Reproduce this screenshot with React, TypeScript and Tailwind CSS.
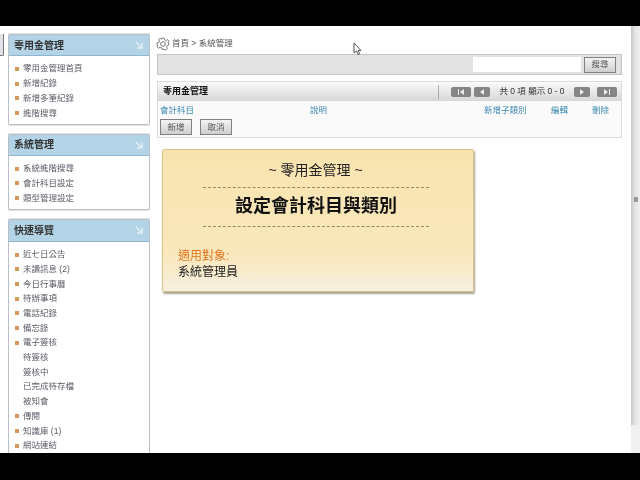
import React from 'react';

const cjk = "font-['Liberation_Sans','Noto_Sans_CJK_TC',sans-serif]";

function Panel({ title, items, tall }: { title: string; items: { label: string; plain?: boolean }[]; tall?: boolean }) {
  return (
    <div className={`shrink-0 rounded-[2px] border border-[#b9bfc6] bg-white shadow-[0_0_0_1px_#e3e3e3] ${tall ? 'h-[250px]' : ''}`}>
      <div className={`flex items-center justify-between border-b border-[#8fb6cc] bg-[#b3d4e6] pr-[6px] pl-[5px] ${tall ? 'h-[22px]' : 'h-[21px]'}`}>
        <span className="text-[10px] font-bold text-[#333]">{title}</span>
        <svg width="8" height="8" viewBox="0 0 8 8" className="opacity-90">
          <path d="M1 1 L6.5 6.5 M7 2 V7 H2" fill="none" stroke="#e8f2f8" strokeWidth="1.6" />
        </svg>
      </div>
      <ul className="flex flex-col pt-[5.5px] pb-[4px] pl-[6px]">
        {items.map((item) => (
          <li key={item.label} className="flex h-[14.7px] items-center gap-[4px] text-[8.5px] text-[#5a5a66]">
            <span className={`h-[4px] w-[4px] ${item.plain ? 'bg-transparent' : 'bg-[#d49a5c]'}`} />
            {item.label}
          </li>
        ))}
      </ul>
    </div>
  );
}

function PageButton({ wide, children }: { wide?: boolean; children: React.ReactNode }) {
  return (
    <span className={`flex h-[10px] items-center justify-center rounded-[2px] bg-[#858585] ${wide ? 'w-[20px]' : 'w-[16px]'}`}>
      <svg width="8" height="6" viewBox="0 0 8 6" fill="#ececec">
        {children}
      </svg>
    </span>
  );
}

function GrayButton({ children }: { children: React.ReactNode }) {
  return (
    <button className="flex h-[16px] w-[32px] items-center justify-center border border-[#808080] bg-gradient-to-b from-[#f4f4f4] to-[#cfcfcf] text-[8.5px] text-[#555]">
      {children}
    </button>
  );
}

export default function App() {
  const manage = [{ label: '零用金管理首頁' }, { label: '新增紀錄' }, { label: '新增多筆紀錄' }, { label: '進階搜尋' }];
  const system = [{ label: '系統進階搜尋' }, { label: '會計科目設定' }, { label: '類型管理設定' }];
  const quick = [
    { label: '近七日公告' },
    { label: '未讀訊息 (2)' },
    { label: '今日行事曆' },
    { label: '待辦事項' },
    { label: '電話紀錄' },
    { label: '備忘錄' },
    { label: '電子簽核' },
    { label: '待簽核', plain: true },
    { label: '簽核中', plain: true },
    { label: '已完成待存檔', plain: true },
    { label: '被知會', plain: true },
    { label: '傳閱' },
    { label: '知識庫 (1)' },
    { label: '網站連結' },
  ];

  return (
    <div className={`flex h-[480px] w-[640px] flex-col overflow-hidden bg-black blur-[0.4px] ${cjk}`}>
      <div className="h-[26px] shrink-0 bg-black" />
      <div className="relative flex h-[427px] shrink-0 bg-white">
        <div className="flex w-[8px] shrink-0 flex-col pt-[8px]">
          <div className="h-[22px] w-[4px] rounded-br-[2px] border-r border-b border-[#777] bg-[#dfe3e8]" />
        </div>
        <div className="flex w-[142px] shrink-0 flex-col gap-[8.5px] overflow-hidden pt-[8px]">
          <Panel title="零用金管理" items={manage} />
          <Panel title="系統管理" items={system} />
          <Panel title="快速導覽" items={quick} tall />
        </div>

        <main className="flex min-w-0 flex-1 flex-col pt-[9px] pl-[7px]">
          <div className="-ml-[1px] flex h-[17px] items-center gap-[2px] text-[8.5px] text-[#555]">
            <svg width="14" height="14" viewBox="0 0 24 24" fill="none" stroke="#666" strokeWidth="1.5">
              <path d="M10 2h4l.7 3 2.2 1 2.7-1.5 2.8 2.8L21 10l1 2.2v1.6l-3 .9-.9 2.2 1.5 2.7-2.8 2.8L14 21h-4l-.7-2.4-2.2-.9-2.7 1.5-2.8-2.8L3 14l-1-.2v-3.6l3-.9.9-2.2L4.4 4.4l2.8-2 2.1 1.5z" />
              <circle cx="12" cy="12" r="4" />
            </svg>
            <span>首頁 &gt; 系統管理</span>
          </div>

          <div className="mt-[2px] flex h-[21px] w-[465px] items-center justify-end gap-[3px] border border-[#c4c4c4] bg-[#e3e3e3] pr-[5px]">
            <div className="h-[15px] w-[108px] bg-white" />
            <GrayButton>搜尋</GrayButton>
          </div>

          <div className="mt-[6px] h-[57px] w-[465px] border border-[#dcdcdc] bg-[#fafafa]">
            <div className="flex h-[19px] items-center justify-between bg-gradient-to-b from-[#fbfbfb] to-[#d6d6d6] pr-[4px] pl-[5px]">
              <span className="text-[9px] font-bold text-[#111]">零用金管理</span>
              <div className="flex h-[14px] items-center border-l border-[#aaa] pl-[12px] text-[8.5px] text-[#333]">
                <PageButton wide><path d="M1 0h1v6H1zM7 0v6L3 3z" /></PageButton>
                <span className="w-[3px]" />
                <PageButton><path d="M6 0v6L2 3z" /></PageButton>
                <span className="w-[84px] text-center">共 0 項 顯示 0 - 0</span>
                <PageButton><path d="M2 0v6l4-3z" /></PageButton>
                <span className="w-[7px]" />
                <PageButton wide><path d="M1 0v6l4-3zM6 0h1v6H6z" /></PageButton>
              </div>
            </div>
            <div className="flex h-[18px] items-center pl-[2px] text-[8.5px] text-[#3a87b0]">
              <span className="w-[150px]">會計科目</span>
              <span className="w-[174px]">說明</span>
              <span className="w-[67px]">新增子類別</span>
              <span className="w-[41px]">編輯</span>
              <span>刪除</span>
            </div>
            <div className="flex gap-[8px] pl-[2px]">
              <GrayButton>新增</GrayButton>
              <GrayButton>取消</GrayButton>
            </div>
          </div>

          <div className="mt-[11px] ml-[5px] h-[143px] w-[312px] rounded-[2px] border border-[#d6c48e] bg-gradient-to-b from-[#f9e4af] via-[#f9e8bd] via-75% to-[#f8f0e0] px-[15px] shadow-[1px_2px_2px_#a8a28f]">
            <p className="mt-[11px] pr-[5px] text-center text-[14px] leading-[18px] text-[#222]">~ 零用金管理 ~</p>
            <div className="mt-[8px] mr-[29px] ml-[25px] border-t border-dashed border-[#9a8a60]" />
            <p className="mt-[6px] pr-[4px] text-center text-[18px] leading-[24px] font-bold text-[#111]">設定會計科目與類別</p>
            <div className="mt-[8px] mr-[29px] ml-[25px] border-t border-dashed border-[#9a8a60]" />
            <p className="mt-[21px] text-[12px] leading-[16px] text-[#e0761f]">適用對象:</p>
            <p className="text-[12px] leading-[16px] text-[#222]">系統管理員</p>
          </div>
        </main>

        <div className="flex w-[9px] shrink-0 flex-col">
          <div className="flex h-[399px] flex-col items-center bg-gradient-to-r from-[#c8c8c8] via-[#e6e6e6] to-[#efefef] pt-[171px]">
            <div className="h-[5px] w-[4px] bg-[#999]" />
          </div>
          <div className="flex-1 bg-[#f0f0f0]" />
        </div>

        <svg width="10" height="14" viewBox="0 0 10 14" className="absolute top-[16px] left-[353px]">
          <path d="M1 1v10l2.5-2 1.6 3.5 1.6-.7-1.6-3.3H8z" fill="#fff" stroke="#555" strokeWidth="1" />
        </svg>
      </div>
      <div className="flex-1 bg-black" />
    </div>
  );
}
